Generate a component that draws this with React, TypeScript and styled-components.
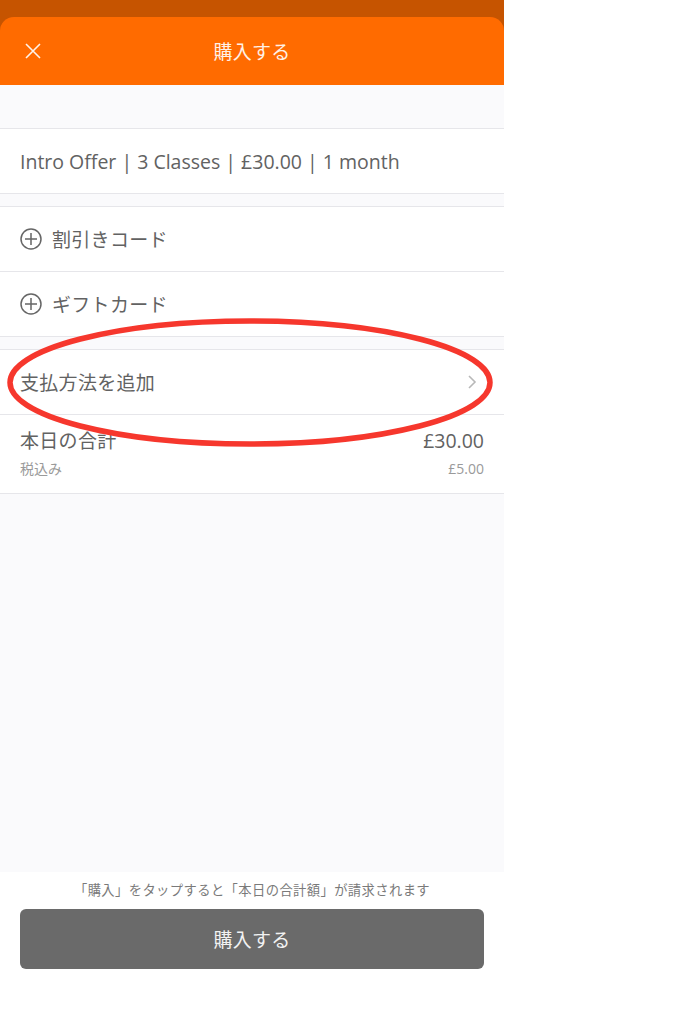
import React from "react";
import styled, { createGlobalStyle } from "styled-components";

const GlobalStyle = createGlobalStyle`
  html, body {
    margin: 0;
    padding: 0;
    background: #ffffff;
  }
  body {
    font-family: "Open Sans", "Noto Sans CJK JP", sans-serif;
    -webkit-font-smoothing: antialiased;
  }
`;

const Page = styled.div`
  display: flex;
  min-height: 1024px;
`;

const Phone = styled.div`
  position: relative;
  width: 504px;
  height: 1024px;
  display: flex;
  flex-direction: column;
  background: #c65400;
  overflow: hidden;
`;

const Header = styled.header`
  margin-top: 17px;
  height: 68px;
  flex-shrink: 0;
  background: #ff6b00;
  border-radius: 14px 14px 0 0;
  display: grid;
  grid-template-columns: 66px 1fr 66px;
  align-items: center;
`;

const CloseButton = styled.button`
  border: 0;
  background: none;
  padding: 0;
  display: flex;
  justify-content: center;
  align-items: center;
  color: #fff3ea;
`;

const Title = styled.h1`
  margin: 0;
  text-align: center;
  font-size: 19px;
  font-weight: 400;
  color: #fff1e6;
  letter-spacing: 0.3px;
`;

const Body = styled.main`
  flex: 1;
  background: #fafafc;
  padding-top: 43px;
  display: flex;
  flex-direction: column;
  gap: 12px;
`;

const Group = styled.section`
  background: #ffffff;
  border-top: 1px solid #e6e6ea;
  border-bottom: 1px solid #e6e6ea;
`;

const Row = styled.div<{ $tall?: boolean }>`
  height: ${(p) => (p.$tall ? 78 : 64)}px;
  padding: 0 20px;
  display: flex;
  align-items: center;
  gap: 10px;
  font-size: 19px;
  color: #626262;
  & + & {
    border-top: 1px solid #e6e6ea;
  }
`;

const Label = styled.span<{ $jp?: boolean }>`
  flex: 1;
  font-size: ${(p) => (p.$jp ? "19px" : "19.5px")};
  letter-spacing: ${(p) => (p.$jp ? "0.3px" : "0")};
  white-space: nowrap;
`;

const TotalGrid = styled.div`
  flex: 1;
  display: grid;
  grid-template-columns: 1fr auto;
  row-gap: 6px;
  align-items: center;
`;

const TotalLabel = styled.span`
  font-size: 19px;
  line-height: 24px;
  color: #626262;
  letter-spacing: 0.3px;
`;

const TotalAmount = styled.span`
  font-size: 19.5px;
  line-height: 24px;
  color: #626262;
  text-align: right;
`;

const TaxText = styled.span<{ $right?: boolean }>`
  font-size: 14px;
  line-height: 20px;
  color: #9a9a9a;
  text-align: ${(p) => (p.$right ? "right" : "left")};
`;

const Footer = styled.footer`
  height: 152px;
  flex-shrink: 0;
  background: #ffffff;
  padding: 9px 20px 0;
  box-sizing: border-box;
  display: flex;
  flex-direction: column;
  gap: 9px;
`;

const Note = styled.p`
  margin: 0;
  text-align: center;
  font-size: 13.3px;
  letter-spacing: 0.4px;
  line-height: 19px;
  color: #7a7a7a;
`;

const BuyButton = styled.button`
  height: 60px;
  border: 0;
  border-radius: 6px;
  background: #6a6a6a;
  color: #f2f2f2;
  font-family: inherit;
  font-size: 19px;
  letter-spacing: 0.3px;
`;

const Annotation = styled.svg`
  position: absolute;
  left: 0;
  top: 0;
  pointer-events: none;
`;

const PlusCircle = () => (
  <svg width="22" height="22" viewBox="0 0 22 22" fill="none" stroke="#666" strokeWidth="1.5">
    <circle cx="11" cy="11" r="10" />
    <path d="M11 5v12M5 11h12" />
  </svg>
);

const Chevron = () => (
  <svg width="16" height="14" viewBox="0 0 16 14" fill="none" stroke="#b8b8b8" strokeWidth="1.6">
    <path d="M1 1l6 6-6 6" />
  </svg>
);

export default function App() {
  return (
    <Page>
      <GlobalStyle />
      <Phone>
        <Header>
          <CloseButton aria-label="close">
            <svg width="16" height="16" viewBox="0 0 16 16" stroke="currentColor" strokeWidth="1.6">
              <path d="M1 1l14 14M15 1L1 15" />
            </svg>
          </CloseButton>
          <Title>購入する</Title>
          <span />
        </Header>
        <Body>
          <Group>
            <Row>
              <Label>Intro Offer | 3 Classes | £30.00 | 1 month</Label>
            </Row>
          </Group>
          <Group>
            <Row>
              <PlusCircle />
              <Label $jp>割引きコード</Label>
            </Row>
            <Row>
              <PlusCircle />
              <Label $jp>ギフトカード</Label>
            </Row>
          </Group>
          <Group>
            <Row>
              <Label $jp>支払方法を追加</Label>
              <Chevron />
            </Row>
            <Row $tall>
              <TotalGrid>
                <TotalLabel>本日の合計</TotalLabel>
                <TotalAmount>£30.00</TotalAmount>
                <TaxText>税込み</TaxText>
                <TaxText $right>£5.00</TaxText>
              </TotalGrid>
            </Row>
          </Group>
        </Body>
        <Footer>
          <Note>「購入」をタップすると「本日の合計額」が請求されます</Note>
          <BuyButton>購入する</BuyButton>
        </Footer>
        <Annotation width="504" height="1024" viewBox="0 0 504 1024">
          <ellipse cx="250" cy="382.5" rx="240" ry="61.5" fill="none" stroke="#f6372d" strokeWidth="5.5" />
        </Annotation>
      </Phone>
    </Page>
  );
}
